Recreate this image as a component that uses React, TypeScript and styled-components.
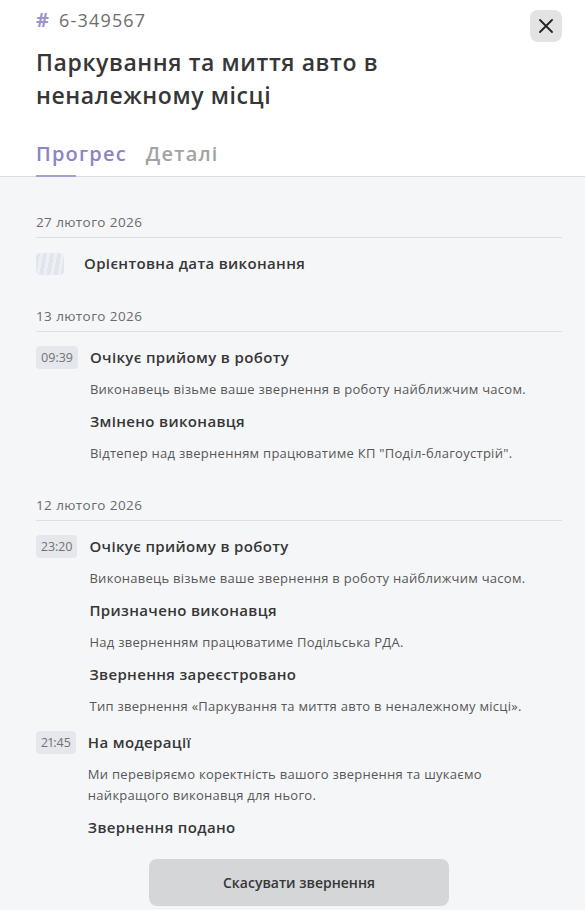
import React from 'react';
import styled, { createGlobalStyle } from 'styled-components';

const GlobalStyle = createGlobalStyle`
  html, body {
    margin: 0;
    padding: 0;
    background: #f5f6f8;
  }
  body {
    font-family: "Open Sans", "Noto Sans", sans-serif;
    color: #363636;
  }
`;

interface Entry {
	time: string;
	steps: { title: string; text?: string }[];
}

interface Group {
	date: string;
	estimate?: string;
	entries: Entry[];
}

const groups: Group[] = [
	{ date: '27 лютого 2026', estimate: 'Орієнтовна дата виконання', entries: [] },
	{
		date: '13 лютого 2026',
		entries: [
			{
				time: '09:39',
				steps: [
					{ title: 'Очікує прийому в роботу', text: 'Виконавець візьме ваше звернення в роботу найближчим часом.' },
					{ title: 'Змінено виконавця', text: 'Відтепер над зверненням працюватиме КП "Поділ-благоустрій".' },
				],
			},
		],
	},
	{
		date: '12 лютого 2026',
		entries: [
			{
				time: '23:20',
				steps: [
					{ title: 'Очікує прийому в роботу', text: 'Виконавець візьме ваше звернення в роботу найближчим часом.' },
					{ title: 'Призначено виконавця', text: 'Над зверненням працюватиме Подільська РДА.' },
					{ title: 'Звернення зареєстровано', text: 'Тип звернення «Паркування та миття авто в неналежному місці».' },
				],
			},
			{
				time: '21:45',
				steps: [
					{ title: 'На модерації', text: 'Ми перевіряємо коректність вашого звернення та шукаємо найкращого виконавця для нього.' },
					{ title: 'Звернення подано' },
				],
			},
		],
	},
];

const Page = styled.div`
  width: 585px;
  min-height: 910px;
  display: flex;
  flex-direction: column;
`;

const Header = styled.header`
  background: #fff;
  padding: 0 23px 0 36px;
`;

const TopRow = styled.div`
  display: flex;
  justify-content: space-between;
  align-items: flex-start;
`;

const RequestId = styled.div`
  margin-top: 8px;
  line-height: 24px;
  font-size: 18px;
  font-weight: 500;
  color: #6e6e6e;
  letter-spacing: 1.2px;
  display: flex;
  align-items: center;
  gap: 10px;
`;

const Hash = styled.span`
  color: #9a93cc;
  font-size: 20px;
  font-weight: 700;
  letter-spacing: 0;
`;

const CloseButton = styled.button`
  margin-top: 10px;
  width: 32px;
  height: 32px;
  border: none;
  border-radius: 8px;
  background: #e3e3e3;
  display: flex;
  align-items: center;
  justify-content: center;
  padding: 0;
  cursor: pointer;
`;

const Title = styled.h1`
  margin: 4px 0 0;
  font-size: 23px;
  line-height: 33px;
  font-weight: 600;
  letter-spacing: 0.6px;
  color: #363636;
  max-width: 420px;
`;

const Tabs = styled.nav`
  display: flex;
  gap: 19px;
  margin: 30px -23px 0 -36px;
  padding-left: 36px;
  border-bottom: 1px solid #d9dce1;
`;

const Tab = styled.div<{ $active?: boolean }>`
  position: relative;
  font-size: 20px;
  line-height: 24px;
  font-weight: 600;
  letter-spacing: 1.2px;
  padding-bottom: 10px;
  color: ${({ $active }) => ($active ? '#8c84c4' : '#a3a3a3')};
  &::after {
    content: '';
    display: ${({ $active }) => ($active ? 'block' : 'none')};
    position: absolute;
    left: 0;
    bottom: -1px;
    width: 40px;
    height: 2px;
    background: #a69fd3;
  }
`;

const Body = styled.main`
  flex: 1;
  padding: 4px 23px 3px 36px;
  display: flex;
  flex-direction: column;
`;

const DateGroup = styled.section`
  margin-top: 32px;
`;

const DateLabel = styled.div`
  font-size: 13.5px;
  line-height: 18px;
  letter-spacing: 0.4px;
  color: #6b6b6b;
  padding-bottom: 6px;
  border-bottom: 1px solid #dcdfe4;
`;

const EstimateRow = styled.div`
  margin-top: 14px;
  display: flex;
  align-items: center;
  gap: 20px;
`;

const Striped = styled.div`
  width: 28px;
  height: 22px;
  border-radius: 4px;
  background: repeating-linear-gradient(
    100deg,
    #e1e5ec 0 4px,
    #edeff4 4px 7px
  );
`;

const StepTitle = styled.div`
  font-size: 15px;
  line-height: 23px;
  font-weight: 600;
  letter-spacing: 0.35px;
  color: #363636;
`;

const EntryRow = styled.div`
  margin-top: 14px;
  display: flex;
  align-items: flex-start;
  gap: 12px;
`;

const TimeBadge = styled.div`
  height: 23px;
  padding: 0 5px;
  border-radius: 4px;
  background: #e4e7ec;
  font-size: 12.5px;
  line-height: 23px;
  font-variant-numeric: proportional-nums;
  color: #727272;
`;

const Steps = styled.div`
  display: flex;
  flex-direction: column;
  gap: 10px;
`;

const StepText = styled.div`
  font-size: 13px;
  line-height: 21px;
  letter-spacing: 0.27px;
  color: #575757;
  max-width: 440px;
`;

const Footer = styled.div`
  display: flex;
  justify-content: center;
  margin-top: 20px;
`;

const CancelButton = styled.button`
  width: 300px;
  height: 47px;
  border: none;
  border-radius: 8px;
  background: #d5d6d8;
  font-family: inherit;
  font-size: 14px;
  font-weight: 600;
  color: #363636;
  cursor: pointer;
`;

export default function App() {
	return (
		<Page>
			<GlobalStyle />
			<Header>
				<TopRow>
					<RequestId>
						<Hash>#</Hash>6-349567
					</RequestId>
					<CloseButton aria-label="Закрити">
						<svg width="14" height="14" viewBox="0 0 14 14">
							<path d="M1 1L13 13M13 1L1 13" stroke="#222" strokeWidth="1.8" strokeLinecap="round" />
						</svg>
					</CloseButton>
				</TopRow>
				<Title>Паркування та миття авто в неналежному місці</Title>
				<Tabs>
					<Tab $active>Прогрес</Tab>
					<Tab>Деталі</Tab>
				</Tabs>
			</Header>
			<Body>
				{groups.map((g) => (
					<DateGroup key={g.date}>
						<DateLabel>{g.date}</DateLabel>
						{g.estimate && (
							<EstimateRow>
								<Striped />
								<StepTitle>{g.estimate}</StepTitle>
							</EstimateRow>
						)}
						{g.entries.map((e) => (
							<EntryRow key={e.time}>
								<TimeBadge>{e.time}</TimeBadge>
								<Steps>
									{e.steps.map((s) => (
										<React.Fragment key={s.title}>
											<StepTitle>{s.title}</StepTitle>
											{s.text && <StepText>{s.text}</StepText>}
										</React.Fragment>
									))}
								</Steps>
							</EntryRow>
						))}
					</DateGroup>
				))}
				<Footer>
					<CancelButton>Скасувати звернення</CancelButton>
				</Footer>
			</Body>
		</Page>
	);
}
